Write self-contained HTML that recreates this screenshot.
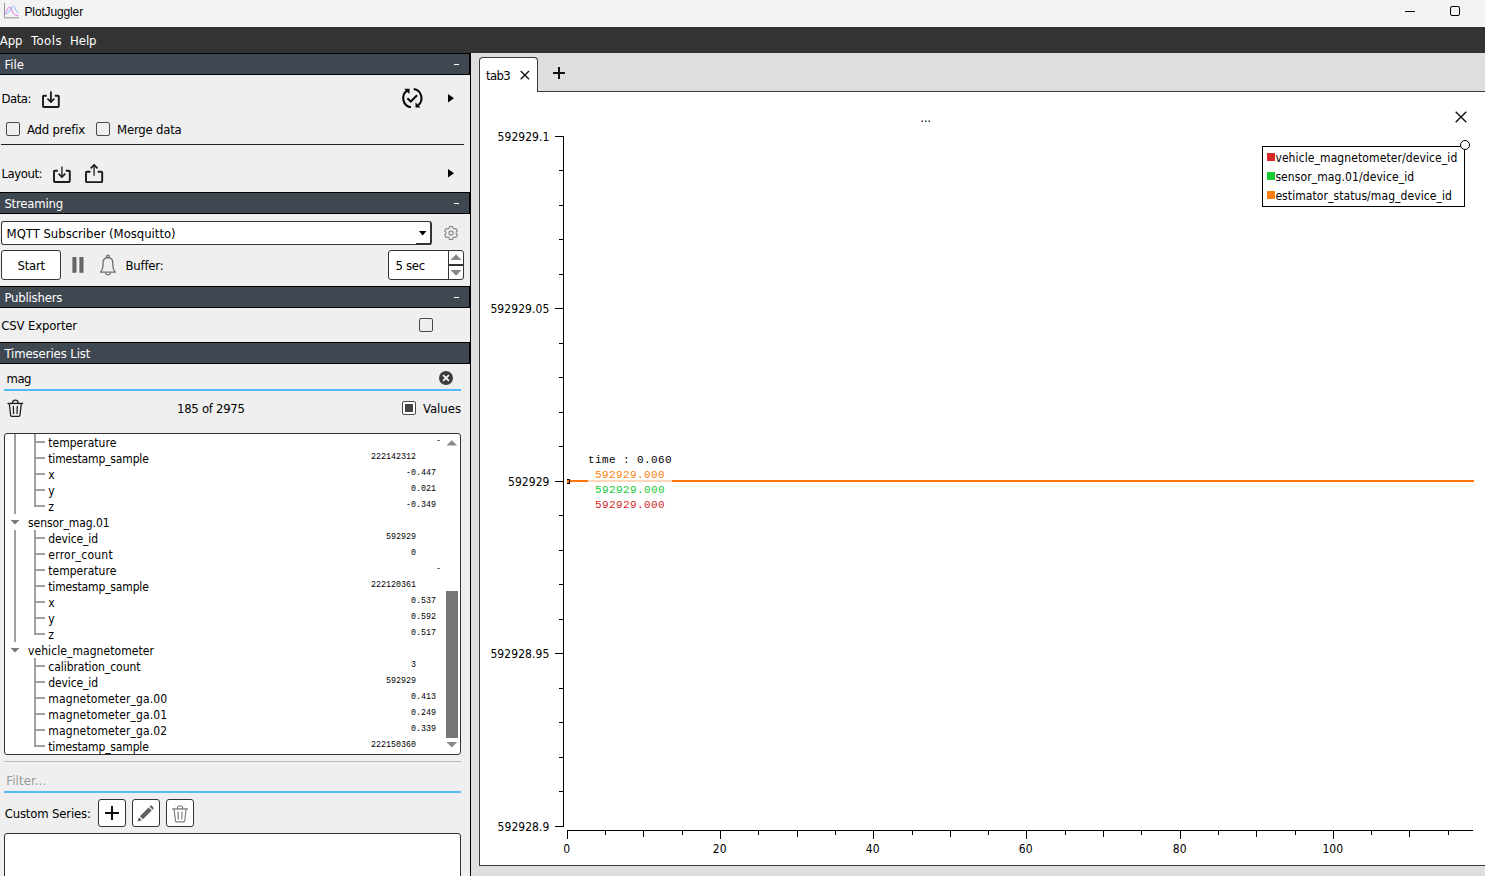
<!DOCTYPE html>
<html><head><meta charset="utf-8"><title>PlotJuggler</title>
<style>
html,body{margin:0;padding:0}
body{width:1485px;height:876px;overflow:hidden;position:relative;background:#efefef;font-family:'DejaVu Sans Condensed','Liberation Sans',sans-serif;font-size:13px;color:#000}
.t{position:absolute;white-space:pre;line-height:0;display:block}
.b{position:absolute;box-sizing:border-box}
svg{position:absolute;overflow:visible}
.hdr{position:absolute;left:0;width:470px;height:22px;box-sizing:border-box;background:#3f4751;border:1px solid #000;border-left:none}
.cb{position:absolute;width:14px;height:14px;box-sizing:border-box;border:1px solid #4a4a4a;border-radius:2px}
.btn{position:absolute;box-sizing:border-box;border:1px solid #333;border-radius:3px;background:#fff}
.ln{position:absolute;background:#999}
.ln{background:#a0a0a0}

</style></head>
<body>
<div class=b style="left:0;top:0;width:1485px;height:27px;background:#f3f3f3"></div>
<div class=b style="left:0;top:27px;width:1485px;height:26px;background:#333"></div>
<svg style="left:3px;top:2px" width="18" height="18" viewBox="0 0 18 18">
<path d="M1.5 0.9 V16.4" fill="none" stroke="#97979d" stroke-width="1"/><path d="M1 15.8 H16" fill="none" stroke="#b6b6b9" stroke-width="1.6"/>
<path d="M1.3 12.3 C3 11 4.5 5.2 6.6 5.2 C8.8 5.2 8.6 9.5 10.2 11 C12 13.3 13.5 13.6 15.6 13.8" fill="none" stroke="#e870e8" stroke-width="1"/>
<path d="M1.3 12.3 C5 11.5 6.5 9.5 7.5 7.5 C8.5 5.8 9.4 4.2 10.4 4.2 C11.5 4.2 12.3 7 12.9 8 C13.6 9.4 14.5 10.2 15.6 11" fill="none" stroke="#86b6fb" stroke-width="1"/>
</svg>
<div class=b style="left:1405px;top:11px;width:10px;height:1px;background:#000"></div>
<div class=b style="left:1450px;top:6px;width:10px;height:10px;border:1px solid #000;border-radius:2px"></div>
<div class=b style="left:0;top:53px;width:470px;height:823px;background:#efefef"></div>
<div class=b style="left:470px;top:53px;width:1px;height:823px;background:#000"></div>
<div class=hdr style="top:53px"></div>
<div class=b style="left:454px;top:64px;width:5px;height:1px;background:#fff"></div>
<div class=hdr style="top:192px"></div>
<div class=b style="left:454px;top:203px;width:5px;height:1px;background:#fff"></div>
<div class=hdr style="top:286px"></div>
<div class=b style="left:454px;top:297px;width:5px;height:1px;background:#fff"></div>
<div class=hdr style="top:342px"></div>
<svg style="left:42px;top:91px" width="18" height="17" viewBox="0 0 18 17"><path d="M4.8 4.7 H1.9 Q1 4.7 1 5.6 V15.1 Q1 16 1.9 16 H15.9 Q16.8 16 16.8 15.1 V5.6 Q16.8 4.7 15.9 4.7 H12.8" fill="none" stroke="#1a1a1a" stroke-width="1.9"/>
<path d="M8.9 0.4 V10.6" fill="none" stroke="#1a1a1a" stroke-width="1.8"/><path d="M5.5 7.6 L8.9 11 L12.3 7.6" fill="none" stroke="#1a1a1a" stroke-width="1.6"/></svg>
<svg style="left:402px;top:88px" width="21" height="21" viewBox="0 0 21 21" fill="none" stroke="#0a0a0a" stroke-width="2.1">
<path d="M8.9 19.2 A9.2 9.2 0 0 1 5.1 2.6"/><path d="M11.7 1.05 A9.2 9.2 0 0 1 16.3 17.1"/>
<path d="M2.2 0.7 H7.6 L7.4 5.9Z" fill="#0a0a0a" stroke="none"/><path d="M13.5 14.2 V19.6 L18.5 19.4Z" fill="#0a0a0a" stroke="none"/>
<path d="M5.4 10.3 L8.8 13.5 L15.1 7.3" stroke-width="2.1"/></svg>
<svg style="left:448px;top:94px" width="6" height="9" viewBox="0 0 6 9"><path d="M0 0 L6 4.25 L0 8.5Z" fill="#000"/></svg>
<div class=cb style="left:6px;top:122px"></div>
<div class=cb style="left:96px;top:122px"></div>
<div class=b style="left:1px;top:144px;width:463px;height:1px;background:#222"></div>
<svg style="left:53px;top:166px" width="18" height="17" viewBox="0 0 18 17"><path d="M4.8 4.7 H1.9 Q1 4.7 1 5.6 V15.1 Q1 16 1.9 16 H15.9 Q16.8 16 16.8 15.1 V5.6 Q16.8 4.7 15.9 4.7 H12.8" fill="none" stroke="#1a1a1a" stroke-width="1.9"/>
<path d="M8.9 0.4 V10.6" fill="none" stroke="#555" stroke-width="1.8"/><path d="M5.5 7.6 L8.9 11 L12.3 7.6" fill="none" stroke="#1a1a1a" stroke-width="1.6"/></svg>
<svg style="left:84px;top:164px" width="20" height="20" viewBox="-0.900 0.000 20.000 20.000" fill="none">
<path d="M5.6 7.7 H2 Q1.1 7.7 1.1 8.6 V17.2 Q1.1 18.1 2 18.1 H16.4 Q17.3 18.1 17.3 17.2 V8.6 Q17.3 7.7 16.4 7.7 H12.8" stroke="#1a1a1a" stroke-width="1.9"/>
<path d="M9.2 1.4 V11.8" stroke="#555" stroke-width="1.8"/><path d="M5.8 4.4 L9.2 1 L12.6 4.4" stroke="#1a1a1a" stroke-width="1.6"/></svg>
<svg style="left:448px;top:169px" width="6" height="9" viewBox="0 0 6 9"><path d="M0 0 L6 4.25 L0 8.5Z" fill="#000"/></svg>
<div class=btn style="left:1px;top:221px;width:431px;height:24px;border-right-width:2px;border-bottom-width:1px"></div>
<div class=b style="left:416px;top:243px;width:15px;height:2px;background:#333"></div>
<svg style="left:419px;top:231px" width="8" height="5" viewBox="0 0 8 5"><path d="M0 0 H7.4 L3.7 4.4Z" fill="#000"/></svg>
<svg style="left:443px;top:225px" width="16" height="16" viewBox="-0.500 -0.500 16.000 16.000" fill="none" stroke="#828282" stroke-width="1.05"><path d="M5.64 2.65 L5.99 0.97 L9.01 0.97 L9.36 2.65 L10.77 3.46 L12.40 2.93 L13.91 5.54 L12.64 6.69 L12.64 8.31 L13.91 9.46 L12.40 12.07 L10.77 11.54 L9.36 12.35 L9.01 14.03 L5.99 14.03 L5.64 12.35 L4.23 11.54 L2.60 12.07 L1.09 9.46 L2.36 8.31 L2.36 6.69 L1.09 5.54 L2.60 2.93 L4.23 3.46Z" stroke-linejoin="round"/><circle cx="7.5" cy="7.5" r="2.1"/></svg>
<div class=btn style="left:1px;top:250px;width:60px;height:30px"></div>
<svg style="left:72px;top:257px" width="12" height="16" viewBox="0 0 12 16"><rect x="0.4" y="0" width="4.1" height="15.8" fill="#666"/><rect x="7.4" y="0" width="4.1" height="15.8" fill="#666"/></svg>
<svg style="left:98px;top:254px" width="19" height="24" viewBox="-0.900 0.000 19.000 24.000" fill="none" stroke="#707070" stroke-width="1.35">
<path d="M1.6 18.1 C3.3 16.3 4.1 14.2 4.1 11.5 V9 C4.1 5.6 6.3 3.7 9 3.7 C11.7 3.7 13.9 5.6 13.9 9 V11.5 C13.9 14.2 14.7 16.3 16.4 18.1 Z" stroke-linejoin="round"/>
<circle cx="9" cy="2.4" r="1.3"/><path d="M6.3 18.9 A2.8 2.6 0 0 0 11.7 18.9"/></svg>
<div class=btn style="left:388px;top:250px;width:76px;height:30px"></div>
<div class=b style="left:448px;top:251px;width:1px;height:28px;background:#333"></div>
<div class=b style="left:449px;top:264px;width:14px;height:2px;background:#333"></div>
<svg style="left:450px;top:254px" width="12" height="7" viewBox="-0.500 0.000 12.000 7.000"><path d="M0 6 L5.5 0.2 L11 6Z" fill="#888"/></svg>
<svg style="left:450px;top:270px" width="12" height="7" viewBox="-0.500 0.000 12.000 7.000"><path d="M0 0 L5.5 5.8 L11 0Z" fill="#888"/></svg>
<div class=cb style="left:419px;top:318px"></div>
<div class=b style="left:4px;top:389px;width:457px;height:2px;background:#55bbfb"></div>
<svg style="left:439px;top:371px" width="14" height="14" viewBox="0 0 14 14"><circle cx="7" cy="7" r="7" fill="#3c3c3c"/>
<path d="M4.1 4.1 L9.9 9.9 M9.9 4.1 L4.1 9.9" stroke="#fff" stroke-width="1.6"/></svg>
<svg style="left:6px;top:399px" width="18" height="19" viewBox="-0.753 0.000 16.941 17.944" fill="none" stroke="#222" stroke-width="1.2"><path d="M0.6 4.2 H15.4" stroke-width="1.3"/><path d="M5.3 4 C5.3 0.2 10.7 0.2 10.7 4"/>
<path d="M2.3 4.4 L3.6 15.4 Q3.7 16.4 4.7 16.4 H11.3 Q12.3 16.4 12.4 15.4 L13.7 4.4"/>
<path d="M6.1 6.6 L6.4 14.2 M9.9 6.6 L9.6 14.2"/></svg>
<div class=cb style="left:402px;top:401px;background:#fff"></div>
<div class=b style="left:405px;top:404px;width:8px;height:8px;background:#444"></div>
<div class=b style="left:4px;top:433px;width:457px;height:322px;background:#fff;border-radius:3px"></div>
<div class=ln style="left:14px;top:434px;width:2px;height:80px"></div>
<div class=ln style="left:14px;top:530px;width:2px;height:112px"></div>
<div class=ln style="left:34px;top:434px;width:2px;height:16px"></div>
<div class=ln style="left:36px;top:441px;width:9px;height:2px"></div>
<div class=ln style="left:34px;top:450px;width:2px;height:16px"></div>
<div class=ln style="left:36px;top:457px;width:9px;height:2px"></div>
<div class=ln style="left:34px;top:466px;width:2px;height:16px"></div>
<div class=ln style="left:36px;top:473px;width:9px;height:2px"></div>
<div class=ln style="left:34px;top:482px;width:2px;height:16px"></div>
<div class=ln style="left:36px;top:489px;width:9px;height:2px"></div>
<div class=ln style="left:34px;top:498px;width:2px;height:9px"></div>
<div class=ln style="left:34px;top:505px;width:11px;height:2px"></div>
<svg style="left:10px;top:520px" width="10" height="6" viewBox="-0.500 0.000 10.000 6.000"><path d="M0 0 H9 L4.5 4.6Z" fill="#7a7a7a"/></svg>
<div class=ln style="left:34px;top:530px;width:2px;height:16px"></div>
<div class=ln style="left:36px;top:537px;width:9px;height:2px"></div>
<div class=ln style="left:34px;top:546px;width:2px;height:16px"></div>
<div class=ln style="left:36px;top:553px;width:9px;height:2px"></div>
<div class=ln style="left:34px;top:562px;width:2px;height:16px"></div>
<div class=ln style="left:36px;top:569px;width:9px;height:2px"></div>
<div class=ln style="left:34px;top:578px;width:2px;height:16px"></div>
<div class=ln style="left:36px;top:585px;width:9px;height:2px"></div>
<div class=ln style="left:34px;top:594px;width:2px;height:16px"></div>
<div class=ln style="left:36px;top:601px;width:9px;height:2px"></div>
<div class=ln style="left:34px;top:610px;width:2px;height:16px"></div>
<div class=ln style="left:36px;top:617px;width:9px;height:2px"></div>
<div class=ln style="left:34px;top:626px;width:2px;height:9px"></div>
<div class=ln style="left:34px;top:633px;width:11px;height:2px"></div>
<svg style="left:10px;top:648px" width="10" height="6" viewBox="-0.500 0.000 10.000 6.000"><path d="M0 0 H9 L4.5 4.6Z" fill="#7a7a7a"/></svg>
<div class=ln style="left:34px;top:658px;width:2px;height:16px"></div>
<div class=ln style="left:36px;top:665px;width:9px;height:2px"></div>
<div class=ln style="left:34px;top:674px;width:2px;height:16px"></div>
<div class=ln style="left:36px;top:681px;width:9px;height:2px"></div>
<div class=ln style="left:34px;top:690px;width:2px;height:16px"></div>
<div class=ln style="left:36px;top:697px;width:9px;height:2px"></div>
<div class=ln style="left:34px;top:706px;width:2px;height:16px"></div>
<div class=ln style="left:36px;top:713px;width:9px;height:2px"></div>
<div class=ln style="left:34px;top:722px;width:2px;height:16px"></div>
<div class=ln style="left:36px;top:729px;width:9px;height:2px"></div>
<div class=ln style="left:34px;top:738px;width:2px;height:9px"></div>
<div class=ln style="left:34px;top:745px;width:11px;height:2px"></div>
<svg style="left:446px;top:440px" width="12" height="7" viewBox="-0.500 -0.200 12.000 7.000"><path d="M0 5.4 L5.3 0 L10.6 5.4Z" fill="#8a8a8a"/></svg>
<div class=b style="left:446px;top:591px;width:12px;height:147px;background:#777"></div>
<svg style="left:446px;top:742px" width="12" height="7" viewBox="-0.500 0.000 12.000 7.000"><path d="M0 0 L5.3 5.6 L10.6 0Z" fill="#8a8a8a"/></svg>
<div class=b style="left:4px;top:761px;width:457px;height:1px;background:#bdbdbd"></div>
<div class=b style="left:4px;top:791px;width:457px;height:2px;background:#55bbfb"></div>
<div class=btn style="left:98px;top:799px;width:28px;height:28px"></div>
<div class=btn style="left:132px;top:799px;width:28px;height:28px"></div>
<div class=btn style="left:166px;top:799px;width:28px;height:28px"></div>
<div class=b style="left:105px;top:812px;width:14px;height:2px;background:#111"></div>
<div class=b style="left:111px;top:806px;width:2px;height:14px;background:#111"></div>
<svg style="left:137px;top:805px" width="18" height="17" viewBox="0 0 18 17"><path d="M0.6 16.6 L1.9 12.2 L4.9 15.2 Z M2.9 11.2 L11.6 2.5 L14.7 5.6 L6 14.3 Z M12.5 1.6 L13.4 0.7 Q14.1 0 14.8 0.7 L16.5 2.4 Q17.2 3.1 16.5 3.8 L15.6 4.7 Z" fill="#606060"/></svg>
<svg style="left:171px;top:804px" width="18" height="19" viewBox="-0.565 -0.472 16.941 17.944" fill="none" stroke="#7c7c7c" stroke-width="1.1"><path d="M0.6 4.2 H15.4" stroke-width="1.3"/><path d="M5.3 4 C5.3 0.2 10.7 0.2 10.7 4"/>
<path d="M2.3 4.4 L3.6 15.4 Q3.7 16.4 4.7 16.4 H11.3 Q12.3 16.4 12.4 15.4 L13.7 4.4"/>
<path d="M6.1 6.6 L6.4 14.2 M9.9 6.6 L9.6 14.2"/></svg>
<div class=btn style="left:4px;top:833px;width:457px;height:60px"></div>
<div class=b style="left:471px;top:53px;width:1014px;height:823px;background:#dedede"></div>
<div class=b style="left:479px;top:91px;width:1010px;height:775px;background:#fff;border:1px solid #3a3a3a"></div>
<div class=b style="left:479px;top:57px;width:59px;height:35px;background:#fff;border:1px solid #3a3a3a;border-bottom:none;border-radius:4px 4px 0 0"></div>
<div class=b style="left:480px;top:90px;width:57px;height:3px;background:#fff"></div>
<svg style="left:520px;top:70px" width="11" height="11" viewBox="0.000 -0.300 11.000 11.000"><path d="M0.7 0.7 L9 9 M9 0.7 L0.7 9" stroke="#111" stroke-width="1.3"/></svg>
<div class=b style="left:553px;top:72px;width:12px;height:1.5px;background:#111"></div>
<div class=b style="left:558.3px;top:67px;width:1.5px;height:11.5px;background:#111"></div>
<svg style="left:1455px;top:111px" width="12" height="12" viewBox="0 0 12 12"><path d="M0.7 0.7 L11.3 11.3 M11.3 0.7 L0.7 11.3" stroke="#111" stroke-width="1.4"/></svg>
<div class=b style="left:563px;top:136px;width:1px;height:691px;background:#000"></div>
<div class=b style="left:555px;top:136px;width:8px;height:1px;background:#000"></div>
<div class=b style="left:559px;top:170px;width:4px;height:1px;background:#000"></div>
<div class=b style="left:559px;top:205px;width:4px;height:1px;background:#000"></div>
<div class=b style="left:559px;top:239px;width:4px;height:1px;background:#000"></div>
<div class=b style="left:559px;top:274px;width:4px;height:1px;background:#000"></div>
<div class=b style="left:555px;top:308px;width:8px;height:1px;background:#000"></div>
<div class=b style="left:559px;top:343px;width:4px;height:1px;background:#000"></div>
<div class=b style="left:559px;top:377px;width:4px;height:1px;background:#000"></div>
<div class=b style="left:559px;top:412px;width:4px;height:1px;background:#000"></div>
<div class=b style="left:559px;top:446px;width:4px;height:1px;background:#000"></div>
<div class=b style="left:555px;top:481px;width:8px;height:1px;background:#000"></div>
<div class=b style="left:559px;top:515px;width:4px;height:1px;background:#000"></div>
<div class=b style="left:559px;top:550px;width:4px;height:1px;background:#000"></div>
<div class=b style="left:559px;top:584px;width:4px;height:1px;background:#000"></div>
<div class=b style="left:559px;top:619px;width:4px;height:1px;background:#000"></div>
<div class=b style="left:555px;top:653px;width:8px;height:1px;background:#000"></div>
<div class=b style="left:559px;top:688px;width:4px;height:1px;background:#000"></div>
<div class=b style="left:559px;top:722px;width:4px;height:1px;background:#000"></div>
<div class=b style="left:559px;top:757px;width:4px;height:1px;background:#000"></div>
<div class=b style="left:559px;top:791px;width:4px;height:1px;background:#000"></div>
<div class=b style="left:555px;top:826px;width:8px;height:1px;background:#000"></div>
<div class=b style="left:567px;top:830px;width:906px;height:1px;background:#000"></div>
<div class=b style="left:567px;top:830px;width:1px;height:9px;background:#000"></div>
<div class=b style="left:605px;top:830px;width:1px;height:5px;background:#000"></div>
<div class=b style="left:643px;top:830px;width:1px;height:7px;background:#000"></div>
<div class=b style="left:682px;top:830px;width:1px;height:5px;background:#000"></div>
<div class=b style="left:720px;top:830px;width:1px;height:9px;background:#000"></div>
<div class=b style="left:758px;top:830px;width:1px;height:5px;background:#000"></div>
<div class=b style="left:797px;top:830px;width:1px;height:7px;background:#000"></div>
<div class=b style="left:835px;top:830px;width:1px;height:5px;background:#000"></div>
<div class=b style="left:873px;top:830px;width:1px;height:9px;background:#000"></div>
<div class=b style="left:912px;top:830px;width:1px;height:5px;background:#000"></div>
<div class=b style="left:950px;top:830px;width:1px;height:7px;background:#000"></div>
<div class=b style="left:988px;top:830px;width:1px;height:5px;background:#000"></div>
<div class=b style="left:1026px;top:830px;width:1px;height:9px;background:#000"></div>
<div class=b style="left:1065px;top:830px;width:1px;height:5px;background:#000"></div>
<div class=b style="left:1103px;top:830px;width:1px;height:7px;background:#000"></div>
<div class=b style="left:1141px;top:830px;width:1px;height:5px;background:#000"></div>
<div class=b style="left:1180px;top:830px;width:1px;height:9px;background:#000"></div>
<div class=b style="left:1218px;top:830px;width:1px;height:5px;background:#000"></div>
<div class=b style="left:1256px;top:830px;width:1px;height:7px;background:#000"></div>
<div class=b style="left:1295px;top:830px;width:1px;height:5px;background:#000"></div>
<div class=b style="left:1333px;top:830px;width:1px;height:9px;background:#000"></div>
<div class=b style="left:1371px;top:830px;width:1px;height:5px;background:#000"></div>
<div class=b style="left:1409px;top:830px;width:1px;height:7px;background:#000"></div>
<div class=b style="left:1448px;top:830px;width:1px;height:5px;background:#000"></div>
<div class=b style="left:567px;top:480px;width:907px;height:2px;background:#ff7505"></div>
<div class=b style="left:567px;top:482px;width:2px;height:1px;background:#ff7505"></div>
<div class=b style="left:567px;top:479px;width:3px;height:1px;background:#000"></div>
<div class=b style="left:567px;top:483px;width:3px;height:1px;background:#000"></div>
<div class=b style="left:569px;top:479px;width:1px;height:5px;background:#000"></div>
<div class=b style="left:588px;top:452px;width:84px;height:60px;background:rgba(255,255,255,0.72)"></div>
<div class=b style="left:1262px;top:146px;width:203px;height:61px;background:#fff;border:1px solid #000"></div>
<div class=b style="left:1460px;top:140px;width:10px;height:10px;background:#fff;border:1px solid #000;border-radius:50%"></div>
<div class=b style="left:1267px;top:153px;width:8px;height:8px;background:#d62728"></div>
<div class=b style="left:1267px;top:172px;width:8px;height:8px;background:#1ac938"></div>
<div class=b style="left:1267px;top:191px;width:8px;height:8px;background:#ff7f0e"></div>
<span class=t style="left:24.50px;top:12.00px;font-size:12px;color:#000;letter-spacing:-0.141px;font-family:'Liberation Sans',sans-serif;">PlotJuggler</span>
<span class=t style="left:-0.30px;top:41.00px;font-size:13px;color:#fff;letter-spacing:-0.020px;">App</span>
<span class=t style="left:31.00px;top:41.00px;font-size:13px;color:#fff;letter-spacing:0.481px;">Tools</span>
<span class=t style="left:70.00px;top:41.00px;font-size:13px;color:#fff;letter-spacing:-0.047px;">Help</span>
<span class=t style="left:4.40px;top:64.50px;font-size:13px;color:#fff;letter-spacing:0.029px;">File</span>
<span class=t style="left:4.40px;top:203.50px;font-size:13px;color:#fff;letter-spacing:-0.199px;">Streaming</span>
<span class=t style="left:4.40px;top:297.50px;font-size:13px;color:#fff;letter-spacing:-0.188px;">Publishers</span>
<span class=t style="left:4.40px;top:353.50px;font-size:13px;color:#fff;letter-spacing:-0.099px;">Timeseries List</span>
<span class=t style="left:1.50px;top:99.10px;font-size:13px;color:#000;letter-spacing:-0.475px;">Data:</span>
<span class=t style="left:27.00px;top:130.00px;font-size:13px;color:#000;letter-spacing:-0.178px;">Add prefix</span>
<span class=t style="left:117.00px;top:130.00px;font-size:13px;color:#000;letter-spacing:-0.196px;">Merge data</span>
<span class=t style="left:1.50px;top:174.10px;font-size:13px;color:#000;letter-spacing:-0.458px;">Layout:</span>
<span class=t style="left:6.60px;top:234.00px;font-size:13px;color:#000;letter-spacing:-0.035px;">MQTT Subscriber (Mosquitto)</span>
<span class=t style="left:17.50px;top:265.50px;font-size:13px;color:#000;letter-spacing:-0.216px;">Start</span>
<span class=t style="left:125.50px;top:265.50px;font-size:13px;color:#000;letter-spacing:-0.217px;">Buffer:</span>
<span class=t style="left:395.40px;top:265.50px;font-size:13px;color:#000;letter-spacing:-0.255px;">5 sec</span>
<span class=t style="left:1.30px;top:325.60px;font-size:13px;color:#000;letter-spacing:-0.158px;">CSV Exporter</span>
<span class=t style="left:6.50px;top:379.00px;font-size:13px;color:#000;letter-spacing:-0.500px;">mag</span>
<span class=t style="left:177.00px;top:409.00px;font-size:13px;color:#000;letter-spacing:-0.280px;">185 of 2975</span>
<span class=t style="left:423.00px;top:409.00px;font-size:13px;color:#000;letter-spacing:-0.021px;">Values</span>
<span class=t style="left:48.30px;top:443.00px;font-size:12px;color:#000;letter-spacing:0.014px;">temperature</span>
<span class=t style="left:436.00px;top:441.00px;font-size:8.33px;color:#000;font-family:'Liberation Mono','DejaVu Sans Mono',monospace;">-</span>
<span class=t style="left:48.30px;top:459.00px;font-size:12px;color:#000;letter-spacing:-0.156px;">timestamp_sample</span>
<span class=t style="left:371.03px;top:457.00px;font-size:8.33px;color:#000;font-family:'Liberation Mono','DejaVu Sans Mono',monospace;">222142312     </span>
<span class=t style="left:48.30px;top:475.00px;font-size:12px;color:#000;">x</span>
<span class=t style="left:406.02px;top:473.00px;font-size:8.33px;color:#000;font-family:'Liberation Mono','DejaVu Sans Mono',monospace;">-0.447 </span>
<span class=t style="left:48.30px;top:491.00px;font-size:12px;color:#000;">y</span>
<span class=t style="left:411.00px;top:489.00px;font-size:8.33px;color:#000;font-family:'Liberation Mono','DejaVu Sans Mono',monospace;">0.021 </span>
<span class=t style="left:48.30px;top:507.00px;font-size:12px;color:#000;">z</span>
<span class=t style="left:406.02px;top:505.00px;font-size:8.33px;color:#000;font-family:'Liberation Mono','DejaVu Sans Mono',monospace;">-0.349 </span>
<span class=t style="left:28.00px;top:523.00px;font-size:12px;color:#000;letter-spacing:-0.056px;">sensor_mag.01</span>
<span class=t style="left:48.30px;top:539.00px;font-size:12px;color:#000;letter-spacing:-0.113px;">device_id</span>
<span class=t style="left:386.02px;top:537.00px;font-size:8.33px;color:#000;font-family:'Liberation Mono','DejaVu Sans Mono',monospace;">592929     </span>
<span class=t style="left:48.30px;top:555.00px;font-size:12px;color:#000;letter-spacing:0.242px;">error_count</span>
<span class=t style="left:411.00px;top:553.00px;font-size:8.33px;color:#000;font-family:'Liberation Mono','DejaVu Sans Mono',monospace;">0     </span>
<span class=t style="left:48.30px;top:571.00px;font-size:12px;color:#000;letter-spacing:0.014px;">temperature</span>
<span class=t style="left:436.00px;top:569.00px;font-size:8.33px;color:#000;font-family:'Liberation Mono','DejaVu Sans Mono',monospace;">-</span>
<span class=t style="left:48.30px;top:587.00px;font-size:12px;color:#000;letter-spacing:-0.156px;">timestamp_sample</span>
<span class=t style="left:371.03px;top:585.00px;font-size:8.33px;color:#000;font-family:'Liberation Mono','DejaVu Sans Mono',monospace;">222120361     </span>
<span class=t style="left:48.30px;top:603.00px;font-size:12px;color:#000;">x</span>
<span class=t style="left:411.00px;top:601.00px;font-size:8.33px;color:#000;font-family:'Liberation Mono','DejaVu Sans Mono',monospace;">0.537 </span>
<span class=t style="left:48.30px;top:619.00px;font-size:12px;color:#000;">y</span>
<span class=t style="left:411.00px;top:617.00px;font-size:8.33px;color:#000;font-family:'Liberation Mono','DejaVu Sans Mono',monospace;">0.592 </span>
<span class=t style="left:48.30px;top:635.00px;font-size:12px;color:#000;">z</span>
<span class=t style="left:411.00px;top:633.00px;font-size:8.33px;color:#000;font-family:'Liberation Mono','DejaVu Sans Mono',monospace;">0.517 </span>
<span class=t style="left:28.00px;top:651.00px;font-size:12px;color:#000;letter-spacing:0.068px;">vehicle_magnetometer</span>
<span class=t style="left:48.30px;top:667.00px;font-size:12px;color:#000;letter-spacing:-0.053px;">calibration_count</span>
<span class=t style="left:411.00px;top:665.00px;font-size:8.33px;color:#000;font-family:'Liberation Mono','DejaVu Sans Mono',monospace;">3     </span>
<span class=t style="left:48.30px;top:683.00px;font-size:12px;color:#000;letter-spacing:-0.113px;">device_id</span>
<span class=t style="left:386.02px;top:681.00px;font-size:8.33px;color:#000;font-family:'Liberation Mono','DejaVu Sans Mono',monospace;">592929     </span>
<span class=t style="left:48.30px;top:699.00px;font-size:12px;color:#000;letter-spacing:0.122px;">magnetometer_ga.00</span>
<span class=t style="left:411.00px;top:697.00px;font-size:8.33px;color:#000;font-family:'Liberation Mono','DejaVu Sans Mono',monospace;">0.413 </span>
<span class=t style="left:48.30px;top:715.00px;font-size:12px;color:#000;letter-spacing:0.122px;">magnetometer_ga.01</span>
<span class=t style="left:411.00px;top:713.00px;font-size:8.33px;color:#000;font-family:'Liberation Mono','DejaVu Sans Mono',monospace;">0.249 </span>
<span class=t style="left:48.30px;top:731.00px;font-size:12px;color:#000;letter-spacing:0.122px;">magnetometer_ga.02</span>
<span class=t style="left:411.00px;top:729.00px;font-size:8.33px;color:#000;font-family:'Liberation Mono','DejaVu Sans Mono',monospace;">0.339 </span>
<span class=t style="left:48.30px;top:747.00px;font-size:12px;color:#000;letter-spacing:-0.156px;">timestamp_sample</span>
<span class=t style="left:371.03px;top:745.00px;font-size:8.33px;color:#000;font-family:'Liberation Mono','DejaVu Sans Mono',monospace;">222150360     </span>
<span class=t style="left:6.30px;top:780.70px;font-size:13px;color:#9a9a9a;letter-spacing:0.130px;">Filter...</span>
<span class=t style="left:4.70px;top:813.50px;font-size:13px;color:#000;letter-spacing:-0.167px;">Custom Series:</span>
<span class=t style="left:486.00px;top:76.00px;font-size:13px;color:#000;letter-spacing:-0.606px;">tab3</span>
<span class=t style="left:920.30px;top:117.60px;font-size:13px;color:#000;letter-spacing:-0.214px;">...</span>
<span class=t style="left:497.60px;top:136.70px;font-size:12px;color:#000;letter-spacing:0.037px;">592929.1</span>
<span class=t style="left:490.40px;top:308.70px;font-size:12px;color:#000;letter-spacing:0.069px;">592929.05</span>
<span class=t style="left:508.10px;top:481.70px;font-size:12px;color:#000;letter-spacing:0.016px;">592929</span>
<span class=t style="left:490.40px;top:653.70px;font-size:12px;color:#000;letter-spacing:0.069px;">592928.95</span>
<span class=t style="left:497.60px;top:826.70px;font-size:12px;color:#000;letter-spacing:0.037px;">592928.9</span>
<span class=t style="left:563.26px;top:849.00px;font-size:12px;color:#000;">0</span>
<span class=t style="left:712.83px;top:849.00px;font-size:12px;color:#000;">20</span>
<span class=t style="left:865.83px;top:849.00px;font-size:12px;color:#000;">40</span>
<span class=t style="left:1018.83px;top:849.00px;font-size:12px;color:#000;">60</span>
<span class=t style="left:1172.83px;top:849.00px;font-size:12px;color:#000;">80</span>
<span class=t style="left:1322.40px;top:849.00px;font-size:12px;color:#000;">100</span>
<span class=t style="left:588.00px;top:460.00px;font-size:11px;color:#000;letter-spacing:0.398px;font-family:'Liberation Mono','DejaVu Sans Mono',monospace;">time : 0.060</span>
<span class=t style="left:595.00px;top:475.00px;font-size:11px;color:#ff7f0e;letter-spacing:0.398px;font-family:'Liberation Mono','DejaVu Sans Mono',monospace;">592929.000</span>
<span class=t style="left:595.00px;top:490.00px;font-size:11px;color:#1ac938;letter-spacing:0.398px;font-family:'Liberation Mono','DejaVu Sans Mono',monospace;">592929.000</span>
<span class=t style="left:595.00px;top:505.00px;font-size:11px;color:#d62728;letter-spacing:0.398px;font-family:'Liberation Mono','DejaVu Sans Mono',monospace;">592929.000</span>
<span class=t style="left:1275.40px;top:158.00px;font-size:12px;color:#000;letter-spacing:0.100px;">vehicle_magnetometer/device_id</span>
<span class=t style="left:1275.40px;top:177.00px;font-size:12px;color:#000;letter-spacing:0.096px;">sensor_mag.01/device_id</span>
<span class=t style="left:1275.40px;top:196.00px;font-size:12px;color:#000;letter-spacing:0.079px;">estimator_status/mag_device_id</span>
<div class=b style="left:4px;top:755px;width:457px;height:6px;background:#efefef"></div>
<div class=b style="left:1px;top:430px;width:463px;height:328px;border:3px solid #efefef;border-radius:6px"></div>
<div class=btn style="left:4px;top:433px;width:457px;height:322px;background:transparent"></div>
</body></html>
